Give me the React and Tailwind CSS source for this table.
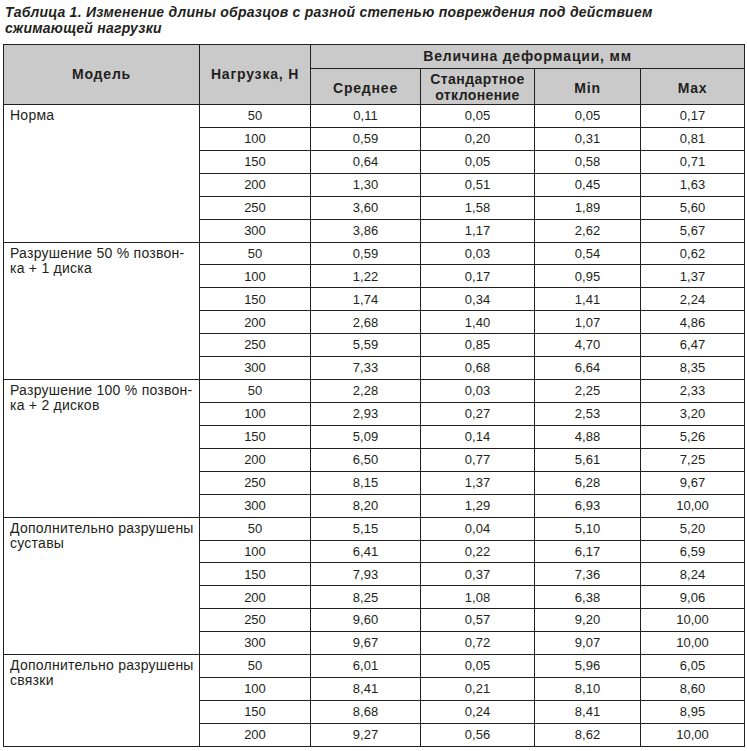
import React from 'react';

const groups = [
  {
    name: 'Норма',
    rows: [
      ['50', '0,11', '0,05', '0,05', '0,17'],
      ['100', '0,59', '0,20', '0,31', '0,81'],
      ['150', '0,64', '0,05', '0,58', '0,71'],
      ['200', '1,30', '0,51', '0,45', '1,63'],
      ['250', '3,60', '1,58', '1,89', '5,60'],
      ['300', '3,86', '1,17', '2,62', '5,67'],
    ],
  },
  {
    name: 'Разрушение 50 % позвон-\nка + 1 диска',
    rows: [
      ['50', '0,59', '0,03', '0,54', '0,62'],
      ['100', '1,22', '0,17', '0,95', '1,37'],
      ['150', '1,74', '0,34', '1,41', '2,24'],
      ['200', '2,68', '1,40', '1,07', '4,86'],
      ['250', '5,59', '0,85', '4,70', '6,47'],
      ['300', '7,33', '0,68', '6,64', '8,35'],
    ],
  },
  {
    name: 'Разрушение 100 % позвон-\nка + 2 дисков',
    rows: [
      ['50', '2,28', '0,03', '2,25', '2,33'],
      ['100', '2,93', '0,27', '2,53', '3,20'],
      ['150', '5,09', '0,14', '4,88', '5,26'],
      ['200', '6,50', '0,77', '5,61', '7,25'],
      ['250', '8,15', '1,37', '6,28', '9,67'],
      ['300', '8,20', '1,29', '6,93', '10,00'],
    ],
  },
  {
    name: 'Дополнительно разрушены\nсуставы',
    rows: [
      ['50', '5,15', '0,04', '5,10', '5,20'],
      ['100', '6,41', '0,22', '6,17', '6,59'],
      ['150', '7,93', '0,37', '7,36', '8,24'],
      ['200', '8,25', '1,08', '6,38', '9,06'],
      ['250', '9,60', '0,57', '9,20', '10,00'],
      ['300', '9,67', '0,72', '9,07', '10,00'],
    ],
  },
  {
    name: 'Дополнительно разрушены\nсвязки',
    rows: [
      ['50', '6,01', '0,05', '5,96', '6,05'],
      ['100', '8,41', '0,21', '8,10', '8,60'],
      ['150', '8,68', '0,24', '8,41', '8,95'],
      ['200', '9,27', '0,56', '8,62', '10,00'],
    ],
  },
];

const cell = 'border border-[#231f20] text-center align-middle p-0';

export default function App() {
  return (
    <div className="w-[747px] h-[751px] bg-white text-[#231f20] overflow-hidden" style={{ fontFamily: '"Liberation Sans", Arial, sans-serif' }}>
      <h1 className="pl-[5px] pt-[4px] text-[14px] leading-[16px] font-bold italic tracking-[0.25px]">
        Таблица 1. Изменение длины образцов с разной степенью повреждения под действием
        <br />
        сжимающей нагрузки
      </h1>

      <table className="ml-[3px] mt-[8px] w-[741px] table-fixed border-collapse text-[13px]">
        <colgroup>
          <col className="w-[196px]" />
          <col className="w-[111px]" />
          <col className="w-[110px]" />
          <col className="w-[114px]" />
          <col className="w-[106px]" />
          <col className="w-[104px]" />
        </colgroup>
        <thead className="bg-[#cacaca] font-bold text-[14px] tracking-[0.8px]">
          <tr className="h-[24px]">
            <th rowSpan={2} className={cell}>Модель</th>
            <th rowSpan={2} className={cell}>Нагрузка, Н</th>
            <th colSpan={4} className={cell}>Величина деформации, мм</th>
          </tr>
          <tr className="h-[36px]">
            <th className={`${cell} pt-[3px]`}>Среднее</th>
            <th className={`${cell} leading-[16px] tracking-[0.4px]`}>Стандартное<br />отклонение</th>
            <th className={`${cell} pt-[3px]`}>Min</th>
            <th className={`${cell} pt-[3px]`}>Max</th>
          </tr>
        </thead>
        <tbody>
          {groups.map((g) =>
            g.rows.map((r, i) => (
              <tr key={g.name + r[0]} className="h-[22.93px]">
                {i === 0 && (
                  <td
                    rowSpan={g.rows.length}
                    className="border border-[#231f20] align-top text-left pl-[6px] pt-[3px] text-[14px] tracking-[0.25px] leading-[15px] whitespace-pre-line"
                  >
                    {g.name}
                  </td>
                )}
                {r.map((v, j) => (
                  <td key={j} className={cell}>{v}</td>
                ))}
              </tr>
            ))
          )}
        </tbody>
      </table>
    </div>
  );
}
